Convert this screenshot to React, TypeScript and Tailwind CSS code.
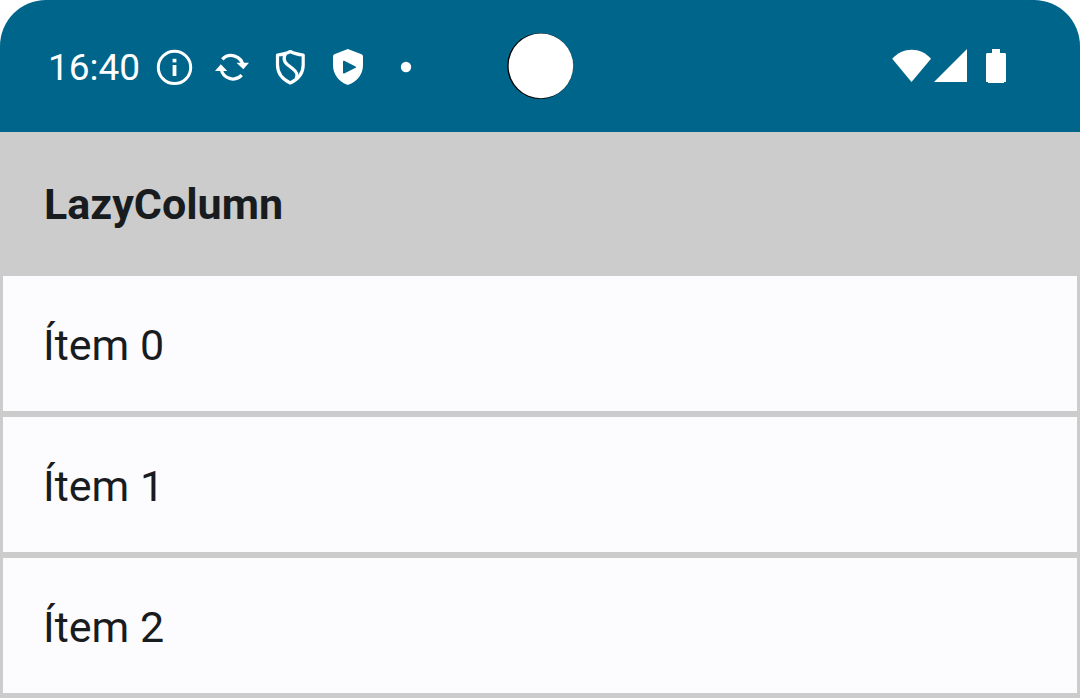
import React from "react";

const items = ["Ítem 0", "Ítem 1", "Ítem 2"];

function InfoIcon() {
  return (
    <svg className="size-10" viewBox="0 0 40 40" fill="none" aria-hidden="true">
      <circle cx="20.5" cy="20.4" r="16.2" stroke="white" strokeWidth="3" />
      <rect x="18.6" y="11.8" width="3.8" height="3.6" fill="white" />
      <rect x="18.6" y="18" width="3.8" height="11" fill="white" />
    </svg>
  );
}

function SyncIcon() {
  return (
    <svg className="size-10" viewBox="0 0 40 40" fill="none" aria-hidden="true">
      <path d="M10.3 12.4 A12 12 0 0 1 31 19" stroke="white" strokeWidth="3.2" />
      <path d="M24.5 15.7 L37 15.7 L31.3 22.2 Z" fill="white" />
      <path d="M29.7 28.2 A12 12 0 0 1 9.2 22" stroke="white" strokeWidth="3.2" />
      <path d="M3 24 L15.3 24 L8.8 17.2 Z" fill="white" />
    </svg>
  );
}

function OutlineShieldIcon() {
  return (
    <svg className="size-10" viewBox="0 0 40 40" fill="none" stroke="white" strokeWidth="3.2" strokeLinejoin="round" aria-hidden="true">
      <path d="M20.3 4.5 C17 6.4 12.5 7.5 7.5 8 V18 C7.5 26.5 13 32.5 20.3 36 C27.6 32.5 33.2 26.5 33.2 18 V8 C28.2 7.5 23.6 6.4 20.3 4.5 Z" />
      <path d="M15.5 7 C13.5 10.5 13.5 14 17 17.2 L22.5 21.5 C27 25 28.5 28 26 31.5" />
    </svg>
  );
}

function PlayShieldIcon() {
  return (
    <svg className="size-10" viewBox="0 0 40 40" aria-hidden="true">
      <path
        fillRule="evenodd"
        fill="white"
        d="M19.8 2 L33.5 7.2 Q35 7.8 35 9.4 V18 C35 27.5 29 34.5 21 37.6 Q19.8 38.1 18.6 37.6 C11 34.5 5 27.5 5 18 V9.4 Q5 7.8 6.4 7.2 Z M15 15 V25.8 Q15 27 16.2 26.4 L27.6 20.8 Q28.6 20.1 27.6 19.4 L16.2 13.8 Q15 13.3 15 15 Z"
      />
    </svg>
  );
}

function DotIcon() {
  return (
    <svg className="size-10" viewBox="0 0 40 40" aria-hidden="true">
      <circle cx="20" cy="20" r="5.2" fill="white" />
    </svg>
  );
}

function WifiIcon() {
  return (
    <svg className="h-9 w-10" viewBox="0 0 40 36" aria-hidden="true">
      <path d="M0.2 10.8 C10.5 -1.4 29 -1.4 39 10.8 L19.5 34 Z" fill="white" />
    </svg>
  );
}

function SignalIcon() {
  return (
    <svg className="h-9 w-9" viewBox="0 0 36 36" aria-hidden="true">
      <path d="M35 1 V34 H2 Z" fill="white" />
    </svg>
  );
}

function BatteryIcon() {
  return (
    <svg className="h-9 w-5" viewBox="0 0 20 36" aria-hidden="true">
      <path d="M6 1 H14 V5 H19 L20 6 V34 H18 V35 H2 V34 H0 V6 L1 5 H6 Z" fill="white" />
    </svg>
  );
}

function Camera() {
  return (
    <svg className="absolute left-1/2 top-8 h-[68px] w-[68px] -translate-x-1/2" viewBox="0 0 68 68" aria-hidden="true">
      <circle cx="34.2" cy="34" r="33" fill="black" />
      <circle cx="34.9" cy="33.9" r="32.3" fill="white" />
    </svg>
  );
}

export default function App() {
  return (
    <div className="h-screen overflow-hidden bg-[#cccccc] font-['Roboto',sans-serif] text-[#191c1e]">
      <div className="bg-white">
        <div className="relative flex h-[132px] items-center justify-between rounded-t-[46px] bg-[#00658b] pl-12 pr-[74px] text-white">
          <div className="flex items-center gap-3.5 pt-0.5">
            <time className="pt-0.5 text-[37px] leading-10">16:40</time>
            <div className="flex gap-[18px]">
              <InfoIcon />
              <SyncIcon />
              <OutlineShieldIcon />
              <PlayShieldIcon />
              <DotIcon />
            </div>
          </div>
          <Camera />
          <div className="flex items-center">
            <WifiIcon />
            <SignalIcon />
            <div className="ml-[18px] flex">
              <BatteryIcon />
            </div>
          </div>
        </div>
      </div>
      <main>
        <h1 className="px-11 pb-[38px] pt-[42px] text-[43px] font-bold leading-[61px]">LazyColumn</h1>
        <ul>
          {items.map((item) => (
            <li key={item} className="border-[3px] border-[#cccccc] bg-[#fcfcff] px-10 pb-[34px] pt-[38px] text-[43px] leading-[63px]">
              {item}
            </li>
          ))}
        </ul>
      </main>
    </div>
  );
}
